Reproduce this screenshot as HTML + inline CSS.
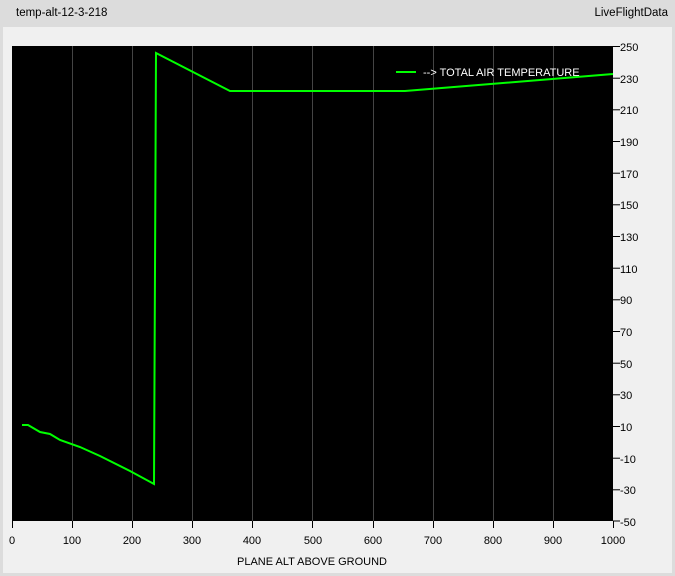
<!DOCTYPE html>
<html><head><style>
body{margin:0;width:675px;height:576px;background:#dcdcdc;font-family:"Liberation Sans",sans-serif;position:relative;overflow:hidden}
.t{position:absolute;font-size:11.5px;color:#000}
</style></head><body>
<div class="t" style="left:16px;top:7px">temp-alt-12-3-218</div>
<div class="t" style="right:7px;top:7px">LiveFlightData</div>
<div style="position:absolute;left:3px;top:27px;width:669px;height:546px;background:#f0f0f0"></div>
<svg style="position:absolute;left:0;top:0" width="675" height="576" font-family="Liberation Sans, sans-serif" font-size="11">
<rect x="12" y="46" width="601" height="475" fill="#000"/>
<g stroke="#444" stroke-width="1">
<line x1="72.5" y1="46" x2="72.5" y2="521"/><line x1="132.5" y1="46" x2="132.5" y2="521"/><line x1="192.5" y1="46" x2="192.5" y2="521"/><line x1="252.5" y1="46" x2="252.5" y2="521"/><line x1="312.5" y1="46" x2="312.5" y2="521"/><line x1="373.5" y1="46" x2="373.5" y2="521"/><line x1="433.5" y1="46" x2="433.5" y2="521"/><line x1="493.5" y1="46" x2="493.5" y2="521"/><line x1="553.5" y1="46" x2="553.5" y2="521"/>
</g>
<g stroke="#000" stroke-width="1">
<line x1="12.5" y1="521" x2="12.5" y2="528"/><line x1="72.5" y1="521" x2="72.5" y2="528"/><line x1="132.5" y1="521" x2="132.5" y2="528"/><line x1="192.5" y1="521" x2="192.5" y2="528"/><line x1="252.5" y1="521" x2="252.5" y2="528"/><line x1="312.5" y1="521" x2="312.5" y2="528"/><line x1="373.5" y1="521" x2="373.5" y2="528"/><line x1="433.5" y1="521" x2="433.5" y2="528"/><line x1="493.5" y1="521" x2="493.5" y2="528"/><line x1="553.5" y1="521" x2="553.5" y2="528"/><line x1="613.5" y1="521" x2="613.5" y2="528"/>
</g>
<g text-anchor="middle">
<text x="12" y="544">0</text><text x="72" y="544">100</text><text x="132" y="544">200</text><text x="192" y="544">300</text><text x="252" y="544">400</text><text x="313" y="544">500</text><text x="373" y="544">600</text><text x="433" y="544">700</text><text x="493" y="544">800</text><text x="553" y="544">900</text><text x="613" y="544">1000</text>
<text x="312" y="565">PLANE ALT ABOVE GROUND</text>
</g>
<g stroke="#000">
<line x1="613" y1="46.5" x2="620" y2="46.5"/><line x1="613" y1="78.2" x2="620" y2="78.2"/><line x1="613" y1="109.8" x2="620" y2="109.8"/><line x1="613" y1="141.5" x2="620" y2="141.5"/><line x1="613" y1="173.2" x2="620" y2="173.2"/><line x1="613" y1="204.8" x2="620" y2="204.8"/><line x1="613" y1="236.5" x2="620" y2="236.5"/><line x1="613" y1="268.2" x2="620" y2="268.2"/><line x1="613" y1="299.8" x2="620" y2="299.8"/><line x1="613" y1="331.5" x2="620" y2="331.5"/><line x1="613" y1="363.2" x2="620" y2="363.2"/><line x1="613" y1="394.8" x2="620" y2="394.8"/><line x1="613" y1="426.5" x2="620" y2="426.5"/><line x1="613" y1="458.2" x2="620" y2="458.2"/><line x1="613" y1="489.8" x2="620" y2="489.8"/><line x1="613" y1="521" x2="620" y2="521"/>
</g>
<g>
<text x="620" y="51">250</text><text x="620" y="83">230</text><text x="620" y="114">210</text><text x="620" y="146">190</text><text x="620" y="178">170</text><text x="620" y="209">150</text><text x="620" y="241">130</text><text x="620" y="273">110</text><text x="620" y="304">90</text><text x="620" y="336">70</text><text x="620" y="368">50</text><text x="620" y="399">30</text><text x="620" y="431">10</text><text x="620" y="463">-10</text><text x="620" y="494">-30</text><text x="620" y="526">-50</text>
</g>
<polyline fill="none" stroke="#00ff00" stroke-width="2" points="22,425 28,425 40,432 50,434 60,440 80,447 100,456 130,471 154,484 156,53 230,91 405,91 613,74"/>
<line x1="396" y1="72" x2="416" y2="72" stroke="#00ff00" stroke-width="2"/>
<text x="423" y="76" fill="#fff">--&gt; TOTAL AIR TEMPERATURE</text>
</svg>
</body></html>
